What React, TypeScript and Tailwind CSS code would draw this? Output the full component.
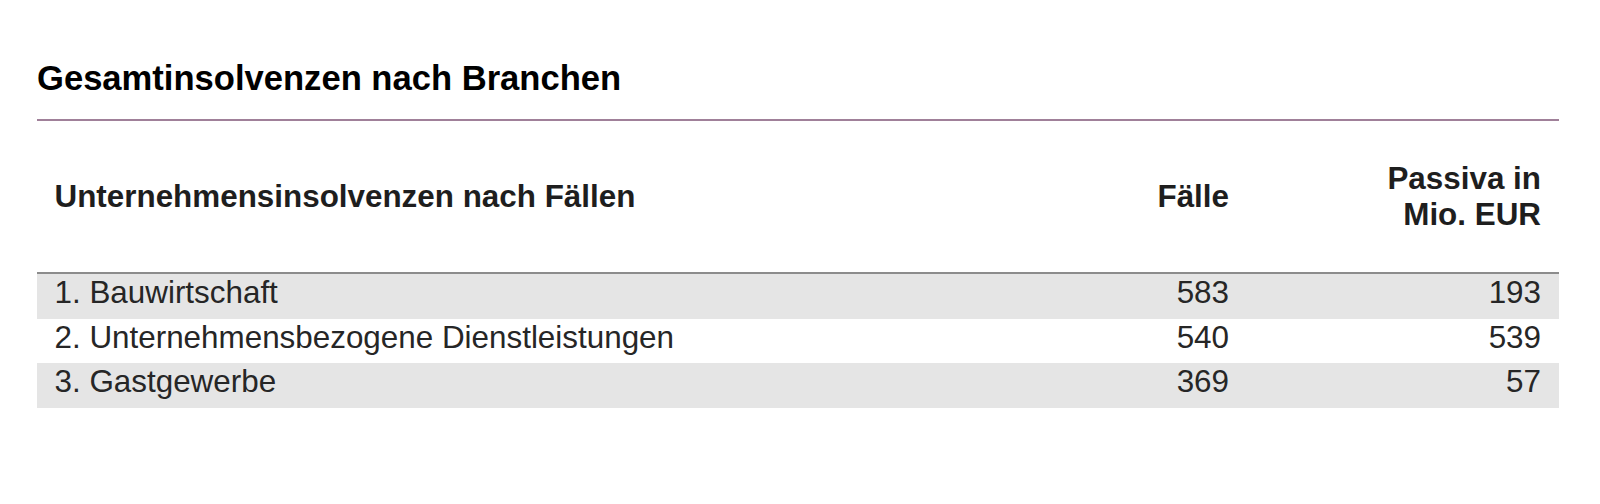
const rows = [
  { name: "1. Bauwirtschaft", cases: "583", liabilities: "193", shaded: true },
  { name: "2. Unternehmensbezogene Dienstleistungen", cases: "540", liabilities: "539", shaded: false },
  { name: "3. Gastgewerbe", cases: "369", liabilities: "57", shaded: true },
];

export default function App() {
  return (
    <div className="h-[504px] w-[1600px] bg-white font-['Liberation_Sans',Arial,sans-serif]">
      <div className="pl-[37px] pr-[41px] pt-[58px]">
        <h2 className="text-[34.6px] font-bold leading-[40px] text-black">
          Gesamtinsolvenzen nach Branchen
        </h2>
        <div className="mt-[21px] h-[2px] bg-[#a08099]" />

        <div className="grid h-[153px] grid-cols-[1fr_200px_312px] items-center border-b-2 border-[#8c8c8c] text-[31.4px] font-bold leading-[36px] text-[#1e1e1e]">
          <div className="pl-[17.5px]">Unternehmensinsolvenzen nach Fällen</div>
          <div className="pr-[18px] text-right">Fälle</div>
          <div className="pr-[18px] text-right">
            Passiva in
            <br />
            Mio. EUR
          </div>
        </div>

        {rows.map((r) => (
          <div
            key={r.name}
            className={
              "grid h-[44.5px] grid-cols-[1fr_200px_312px] pt-[1px] text-[31.4px] leading-[36px] text-[#262626] " +
              (r.shaded ? "bg-[#e5e5e5]" : "bg-white")
            }
          >
            <div className="pl-[17.5px]">{r.name}</div>
            <div className="pr-[18px] text-right">{r.cases}</div>
            <div className="pr-[18px] text-right">{r.liabilities}</div>
          </div>
        ))}
      </div>
    </div>
  );
}
